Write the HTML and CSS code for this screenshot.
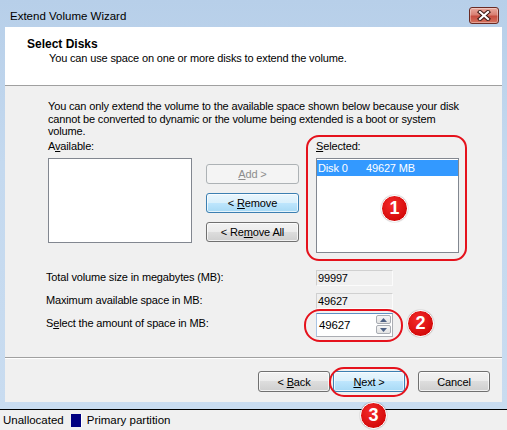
FILE: index.html
```html
<!DOCTYPE html>
<html lang="en">
<head>
    <meta charset="UTF-8">
    <title>Extend Volume Wizard</title>
    <link rel="stylesheet" href="styles.css">
</head>
<body>
<div class="screen">
    <div class="window">
        <!-- title bar -->
        <div class="titlebar">
            <span class="title">Extend Volume Wizard</span>
            <button class="close-btn" title="Close">
                <svg width="14" height="11" viewBox="0 0 14 11">
                    <path d="M3 2 L11 9 M11 2 L3 9" stroke="#3a1814" stroke-width="4.2" stroke-linecap="square" fill="none"/>
                    <path d="M3 2 L11 9 M11 2 L3 9" stroke="#fff" stroke-width="2.2" stroke-linecap="square" fill="none"/>
                </svg>
            </button>
        </div>

        <div class="client">
            <div class="wizard-header">
                <h1>Select Disks</h1>
                <p>You can use space on one or more disks to extend the volume.</p>
            </div>

            <div class="wizard-body">
                <p class="note">You can only extend the volume to the available space shown below because your disk<br>cannot be converted to dynamic or the volume being extended is a boot or system<br>volume.</p>

                <div class="disk-picker">
                    <div class="disk-column">
                        <label>A<u>v</u>ailable:</label>
                        <div class="listbox available-list"></div>
                    </div>
                    <div class="move-buttons">
                        <button class="btn" disabled><u>A</u>dd &gt;</button>
                        <button class="btn default">&lt; <u>R</u>emove</button>
                        <button class="btn">&lt; Re<u>m</u>ove All</button>
                    </div>
                    <div class="disk-column">
                        <label><u>S</u>elected:</label>
                        <div class="listbox selected-list">
                            <div class="list-row active">
                                <span class="disk-name">Disk 0</span>
                                <span>49627 MB</span>
                            </div>
                        </div>
                    </div>
                </div>

                <div class="sizes">
                    <div class="size-row">
                        <span class="size-label">Total volume size in megabytes (MB):</span>
                        <span class="readonly-field">99997</span>
                    </div>
                    <div class="size-row">
                        <span class="size-label">Maximum available space in MB:</span>
                        <span class="readonly-field">49627</span>
                    </div>
                    <div class="size-row spin-row">
                        <label class="size-label">S<u>e</u>lect the amount of space in MB:</label>
                        <div class="spin-box">
                            <span class="spin-value">49627</span>
                            <div class="spin-buttons">
                                <button class="spin-btn">
                                    <svg width="7" height="4" viewBox="0 0 7 4"><polygon points="0,4 7,4 3.5,0" fill="#4d6185"/></svg>
                                </button>
                                <button class="spin-btn">
                                    <svg width="7" height="4" viewBox="0 0 7 4"><polygon points="0,0 7,0 3.5,4" fill="#4d6185"/></svg>
                                </button>
                            </div>
                        </div>
                    </div>
                </div>
            </div>

            <div class="wizard-footer">
                <button class="btn">&lt; <u>B</u>ack</button>
                <button class="btn default"><u>N</u>ext &gt;</button>
                <button class="btn cancel">Cancel</button>
            </div>
        </div>
    </div>

    <!-- disk map legend -->
    <div class="legend">
        <span>Unallocated</span>
        <span class="swatch"></span>
        <span>Primary partition</span>
    </div>

    <!-- numbered callouts -->
    <div class="callout-ring ring-selected"></div>
    <div class="callout-ring ring-amount"></div>
    <div class="callout-ring ring-next"></div>
    <span class="callout-badge badge-1">1</span>
    <span class="callout-badge badge-2">2</span>
    <span class="callout-badge badge-3">3</span>
</div>
</body>
</html>
```

FILE: styles.css
```css
* {
    margin: 0;
    padding: 0;
    box-sizing: border-box;
}

body {
    font-family: "Liberation Sans", Arial, sans-serif;
    font-size: 11px;
    letter-spacing: -0.15px;
    color: #000;
    background: #f0f0f0;
}

.screen {
    position: relative;
    width: 507px;
    height: 430px;
    overflow: hidden;
}

/* window frame */
.window {
    height: 410px;
    padding: 0 5px 7px;
    background: linear-gradient(to bottom, #b7cfe9, #c4d9ef 40%, #c9dcf0);
    border-bottom: 1px solid #000;
    display: flex;
    flex-direction: column;
}

.titlebar {
    height: 27px;
    padding: 4px 3px 0 5px;
    display: flex;
    align-items: center;
    justify-content: space-between;
}

.title {
    font-size: 11.5px;
    letter-spacing: 0;
    color: #000;
}

.close-btn {
    width: 30px;
    height: 17px;
    border: 1px solid #6a2b24;
    border-radius: 3px;
    background: linear-gradient(to bottom, #e8aa9f, #d98073 45%, #c64d3f 55%, #d5735f);
    box-shadow: inset 0 0 0 1px rgba(255, 255, 255, 0.35);
    display: flex;
    align-items: center;
    justify-content: center;
}

.client {
    flex: 1;
    display: flex;
    flex-direction: column;
    background: #f0f0f0;
}

.wizard-header {
    height: 59px;
    padding: 10px 0 0 22px;
    background: #fff;
    border-bottom: 1px solid #a0a0a0;
}

.wizard-header h1 {
    font-size: 12px;
    font-weight: bold;
    line-height: 14px;
    letter-spacing: 0;
}

.wizard-header p {
    margin: 1px 0 0 22px;
    line-height: 13px;
}

.wizard-body {
    flex: 1;
    padding: 14px 0 0 43px;
}

.note {
    line-height: 12.5px;
    margin-bottom: 2px;
}

/* available / selected lists */
.disk-picker {
    display: flex;
    align-items: flex-start;
}

.disk-column label {
    display: block;
    line-height: 13px;
    margin-bottom: 5px;
}

.listbox {
    background: #fff;
    border: 1px solid #828790;
    padding: 1px 0;
}

.available-list {
    width: 144px;
    height: 85px;
}

.selected-list {
    width: 143px;
    height: 95px;
}

.list-row {
    height: 16px;
    line-height: 16px;
    padding-left: 1px;
    display: flex;
}

.list-row.active {
    background: #3399ff;
    color: #fff;
}

.disk-name {
    width: 48px;
}

.move-buttons {
    width: 93px;
    margin: 24px 17px 0 14px;
    display: flex;
    flex-direction: column;
    gap: 9px;
}

.move-buttons .btn {
    height: 20px;
}

/* push buttons */
.btn {
    font-family: inherit;
    font-size: 11px;
    letter-spacing: -0.15px;
    color: #000;
    border: 1px solid #707070;
    border-radius: 3px;
    background: linear-gradient(to bottom, #f2f2f2, #ebebeb 50%, #dddddd 50%, #cfcfcf);
    box-shadow: inset 0 0 0 1px rgba(255, 255, 255, 0.7);
}

.btn.default {
    border-color: #3c7fb1;
    background: linear-gradient(to bottom, #eaf6fd, #d9f0fc 50%, #bee6fd 50%, #a7d9f5);
}

.btn:disabled {
    color: #8d8d8d;
    border-color: #adb2b5;
    background: #f4f4f4;
    box-shadow: none;
}

/* size fields */
.sizes {
    margin: 17px 0 0 -2px;
}

.size-row {
    display: flex;
    align-items: center;
    height: 16px;
}

.size-row + .size-row {
    margin-top: 7px;
}

.size-row.spin-row {
    margin-top: 4px;
    height: 24px;
    align-items: flex-start;
}

.spin-row .size-label {
    padding-top: 4px;
}

.size-label {
    width: 270px;
    line-height: 13px;
}

.readonly-field {
    width: 77px;
    height: 16px;
    line-height: 15px;
    padding-left: 1px;
    border: 1px solid;
    border-color: #d0d0d0 #fbfbfb #fbfbfb #d0d0d0;
}

.spin-box {
    width: 77px;
    height: 24px;
    background: #fff;
    border: 1px solid #abadb3;
    border-top-color: #5d8fc3;
    border-left-color: #a9c4e3;
    display: flex;
    align-items: center;
    justify-content: space-between;
    padding: 0 1px 0 2px;
}

.spin-value {
    font-size: 11.5px;
}

.spin-buttons {
    display: flex;
    flex-direction: column;
    gap: 1px;
}

.spin-btn {
    width: 15px;
    height: 9px;
    border: 1px solid #a8acb3;
    border-radius: 2px;
    background: linear-gradient(to bottom, #f6f6f6, #e3e3e3);
    display: flex;
    align-items: center;
    justify-content: center;
}

/* bottom buttons */
.wizard-footer {
    height: 45px;
    border-top: 1px solid #a0a0a0;
    box-shadow: inset 0 1px 0 #fff;
    padding: 13px 12px 0 0;
    display: flex;
    justify-content: flex-end;
    align-items: flex-start;
    gap: 3px;
}

.wizard-footer .btn {
    width: 72px;
    height: 21px;
}

.wizard-footer .cancel {
    margin-left: 10px;
}

/* legend under the window */
.legend {
    height: 20px;
    padding-left: 3px;
    display: flex;
    align-items: center;
    font-size: 11.5px;
    letter-spacing: 0;
}

.swatch {
    width: 11px;
    height: 13px;
    margin: 0 5px 0 7px;
    background: #000080;
    border-right: 1px solid #fff;
}

/* red callouts */
.callout-ring {
    position: absolute;
    border: 2px solid #e5121c;
    border-radius: 14px;
}

.ring-selected {
    left: 306px;
    top: 135px;
    width: 161px;
    height: 126px;
    border-radius: 13px;
}

.ring-amount {
    left: 304px;
    top: 309px;
    width: 99px;
    height: 33px;
    border-radius: 16px;
}

.ring-next {
    left: 329px;
    top: 367px;
    width: 80px;
    height: 30px;
    border-radius: 15px;
}

.callout-badge {
    position: absolute;
    width: 27px;
    height: 27px;
    border-radius: 50%;
    background: radial-gradient(circle at 40% 35%, #f42a2a, #d50b0b 70%);
    border: 1px solid #fff;
    box-shadow: 0 0 1px rgba(0, 0, 0, 0.6);
    color: #fff;
    font-size: 18px;
    font-weight: bold;
    letter-spacing: 0;
    line-height: 25px;
    text-align: center;
}

.badge-1 {
    left: 381px;
    top: 195px;
}

.badge-2 {
    left: 407px;
    top: 310px;
}

.badge-3 {
    left: 360px;
    top: 402px;
}
```
